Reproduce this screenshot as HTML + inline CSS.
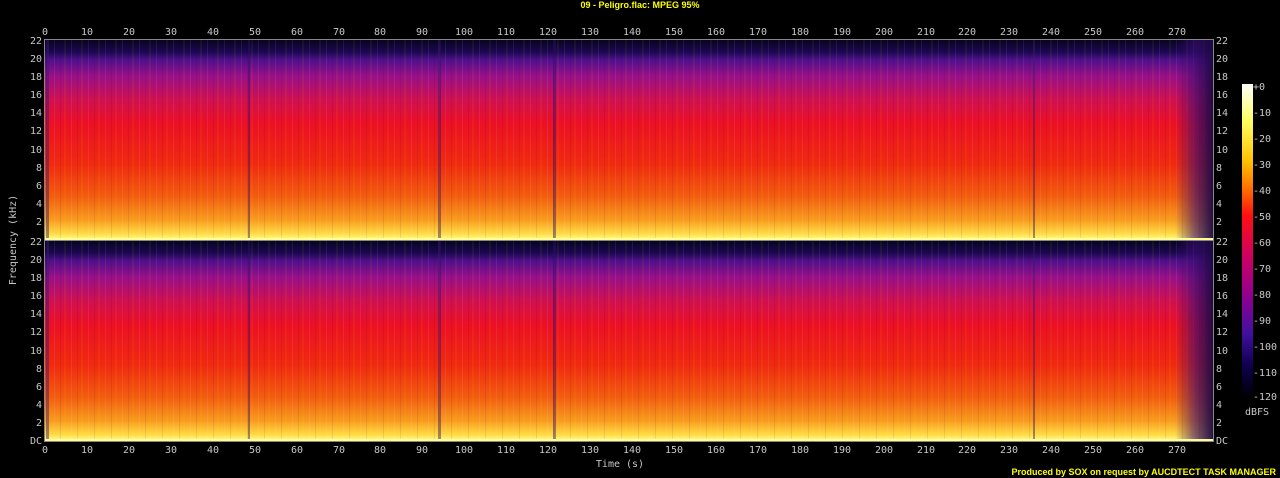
<!DOCTYPE html>
<html><head><meta charset="utf-8"><style>
html,body{margin:0;padding:0;background:#000;width:1280px;height:478px;overflow:hidden}
text{font-family:"DejaVu Sans Mono","Liberation Mono",monospace;font-size:10px;fill:#c8c8c8}
.y{fill:#ffff00;font-weight:bold;font-family:"Liberation Sans",sans-serif;font-size:9px}
</style></head><body>
<svg width="1280" height="478" xmlns="http://www.w3.org/2000/svg">
<defs>
<linearGradient id="ch" x1="0" y1="0" x2="0" y2="1">
<stop offset="0" stop-color="#080420"/>
<stop offset="0.06" stop-color="#1c0852"/>
<stop offset="0.10" stop-color="#50108a"/>
<stop offset="0.18" stop-color="#981088"/>
<stop offset="0.30" stop-color="#d01050"/>
<stop offset="0.42" stop-color="#ec1024"/>
<stop offset="0.62" stop-color="#f02a10"/>
<stop offset="0.78" stop-color="#f25c10"/>
<stop offset="0.90" stop-color="#f89c20"/>
<stop offset="0.97" stop-color="#ffdc48"/>
<stop offset="1" stop-color="#ffffa0"/>
</linearGradient>
<linearGradient id="tail" x1="0" y1="0" x2="1" y2="0">
<stop offset="0" stop-color="#3a0c70" stop-opacity="0"/>
<stop offset="0.5" stop-color="#3a0c70" stop-opacity="0.6"/>
<stop offset="1" stop-color="#1a0840" stop-opacity="0.95"/>
</linearGradient>
<linearGradient id="cb" x1="0" y1="0" x2="0" y2="1">
<stop offset="0" stop-color="#ffffff"/>
<stop offset="0.12" stop-color="#ffff60"/>
<stop offset="0.25" stop-color="#ffc000"/>
<stop offset="0.35" stop-color="#ff6000"/>
<stop offset="0.42" stop-color="#ff1010"/>
<stop offset="0.55" stop-color="#d00060"/>
<stop offset="0.68" stop-color="#900090"/>
<stop offset="0.8" stop-color="#4010a0"/>
<stop offset="0.9" stop-color="#100050"/>
<stop offset="1" stop-color="#000008"/>
</linearGradient>
<pattern id="str" width="17" height="10" patternUnits="userSpaceOnUse">
<rect x="3" width="1" height="10" fill="#fff" opacity="0.07"/>
<rect x="9" width="1" height="10" fill="#000" opacity="0.08"/>
<rect x="13" width="2" height="10" fill="#ff0" opacity="0.05"/>
</pattern>
</defs>
<text class="y" x="640" y="8" text-anchor="middle">09 - Peligro.flac: MPEG 95%</text>
<rect x="45" y="40" width="1168" height="200" fill="url(#ch)"/>
<rect x="45" y="241" width="1168" height="200" fill="url(#ch)"/>
<rect x="45" y="40" width="1168" height="401" fill="url(#str)"/>
<g fill="#30106a" opacity="0.45">
<rect x="46" y="40" width="3" height="200"/><rect x="46" y="241" width="3" height="200"/>
<rect x="248" y="40" width="2" height="200"/><rect x="248" y="241" width="2" height="200"/>
<rect x="438" y="40" width="3" height="200"/><rect x="438" y="241" width="3" height="200"/>
<rect x="553" y="40" width="3" height="200"/><rect x="553" y="241" width="3" height="200"/>
<rect x="1033" y="40" width="2" height="200"/><rect x="1033" y="241" width="2" height="200"/>
</g>
<rect x="1175" y="40" width="38" height="198" fill="url(#tail)"/>
<rect x="1175" y="241" width="38" height="198" fill="url(#tail)"/>
<rect x="45" y="238" width="1168" height="2" fill="#ffff90"/>
<rect x="45" y="439" width="1168" height="2" fill="#ffff90"/>
<rect x="44.5" y="39.5" width="1169" height="402" fill="none" stroke="#888"/>
<line x1="45" y1="240.5" x2="1213" y2="240.5" stroke="#888"/>
<g text-anchor="middle">
<text x="45" y="35">0</text><text x="87" y="35">10</text><text x="129" y="35">20</text><text x="171" y="35">30</text><text x="213" y="35">40</text><text x="255" y="35">50</text><text x="297" y="35">60</text><text x="339" y="35">70</text><text x="380" y="35">80</text><text x="422" y="35">90</text><text x="464" y="35">100</text><text x="506" y="35">110</text><text x="548" y="35">120</text><text x="590" y="35">130</text><text x="632" y="35">140</text><text x="674" y="35">150</text><text x="716" y="35">160</text><text x="758" y="35">170</text><text x="800" y="35">180</text><text x="842" y="35">190</text><text x="884" y="35">200</text><text x="926" y="35">210</text><text x="967" y="35">220</text><text x="1009" y="35">230</text><text x="1051" y="35">240</text><text x="1093" y="35">250</text><text x="1135" y="35">260</text><text x="1177" y="35">270</text>
<text x="45" y="453">0</text><text x="87" y="453">10</text><text x="129" y="453">20</text><text x="171" y="453">30</text><text x="213" y="453">40</text><text x="255" y="453">50</text><text x="297" y="453">60</text><text x="339" y="453">70</text><text x="380" y="453">80</text><text x="422" y="453">90</text><text x="464" y="453">100</text><text x="506" y="453">110</text><text x="548" y="453">120</text><text x="590" y="453">130</text><text x="632" y="453">140</text><text x="674" y="453">150</text><text x="716" y="453">160</text><text x="758" y="453">170</text><text x="800" y="453">180</text><text x="842" y="453">190</text><text x="884" y="453">200</text><text x="926" y="453">210</text><text x="967" y="453">220</text><text x="1009" y="453">230</text><text x="1051" y="453">240</text><text x="1093" y="453">250</text><text x="1135" y="453">260</text><text x="1177" y="453">270</text>
</g>
<g text-anchor="end">
<text x="42" y="44">22</text><text x="42" y="62">20</text><text x="42" y="80">18</text><text x="42" y="98">16</text><text x="42" y="116">14</text><text x="42" y="134">12</text><text x="42" y="153">10</text><text x="42" y="171">8</text><text x="42" y="189">6</text><text x="42" y="207">4</text><text x="42" y="225">2</text>
<text x="42" y="245">22</text><text x="42" y="263">20</text><text x="42" y="281">18</text><text x="42" y="299">16</text><text x="42" y="317">14</text><text x="42" y="335">12</text><text x="42" y="354">10</text><text x="42" y="372">8</text><text x="42" y="390">6</text><text x="42" y="408">4</text><text x="42" y="426">2</text><text x="42" y="444">DC</text>
</g>
<g text-anchor="start">
<text x="1216" y="44">22</text><text x="1216" y="62">20</text><text x="1216" y="80">18</text><text x="1216" y="98">16</text><text x="1216" y="116">14</text><text x="1216" y="134">12</text><text x="1216" y="153">10</text><text x="1216" y="171">8</text><text x="1216" y="189">6</text><text x="1216" y="207">4</text><text x="1216" y="225">2</text>
<text x="1216" y="245">22</text><text x="1216" y="263">20</text><text x="1216" y="281">18</text><text x="1216" y="299">16</text><text x="1216" y="317">14</text><text x="1216" y="335">12</text><text x="1216" y="354">10</text><text x="1216" y="372">8</text><text x="1216" y="390">6</text><text x="1216" y="408">4</text><text x="1216" y="426">2</text><text x="1216" y="444">DC</text>
</g>
<text x="16" y="240" text-anchor="middle" transform="rotate(-90 16 240)">Frequency (kHz)</text>
<text x="620" y="467" text-anchor="middle">Time (s)</text>
<rect x="1242" y="84" width="11" height="312" fill="url(#cb)"/>
<g text-anchor="start">
<text x="1253" y="90">+0</text><text x="1253" y="116">-10</text><text x="1253" y="142">-20</text><text x="1253" y="168">-30</text><text x="1253" y="194">-40</text><text x="1253" y="220">-50</text><text x="1253" y="246">-60</text><text x="1253" y="272">-70</text><text x="1253" y="298">-80</text><text x="1253" y="324">-90</text><text x="1253" y="350">-100</text><text x="1253" y="376">-110</text><text x="1253" y="400">-120</text>
</g>
<text x="1257" y="415" text-anchor="middle">dBFS</text>
<text class="y" x="1276" y="475" text-anchor="end">Produced by SOX on request by AUCDTECT TASK MANAGER</text>
</svg>
</body></html>
